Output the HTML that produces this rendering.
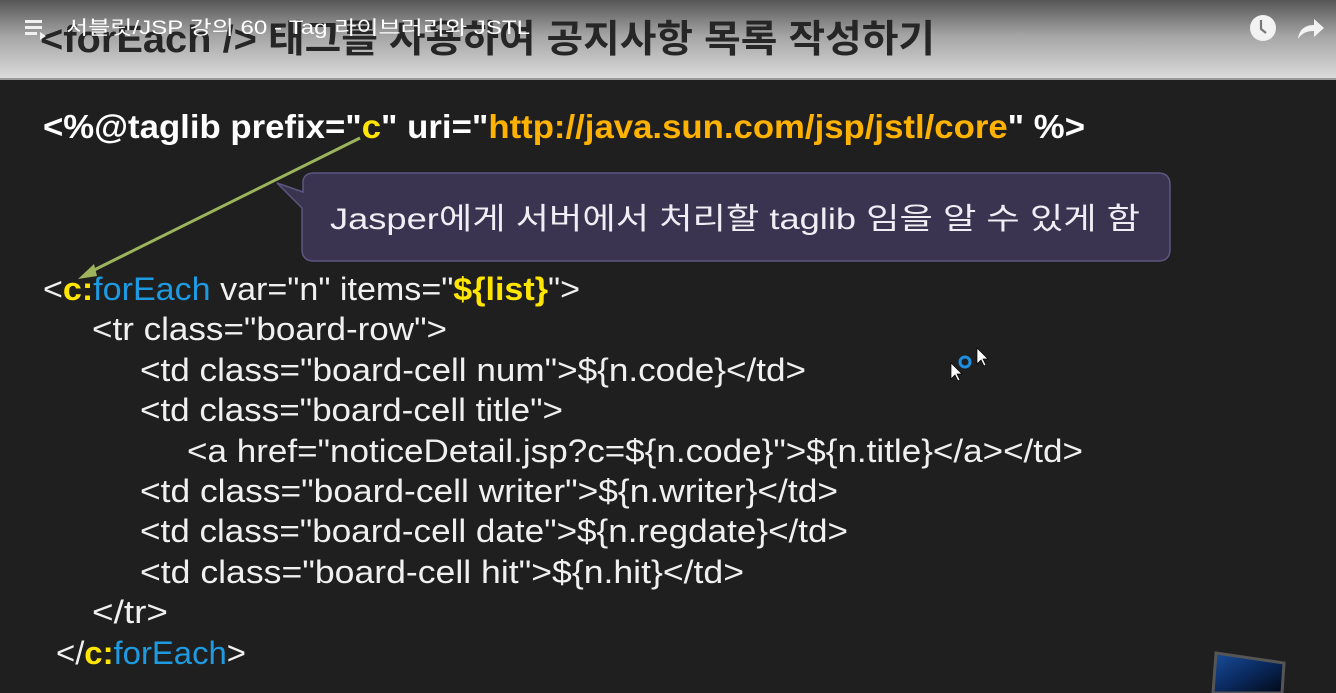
<!DOCTYPE html>
<html><head><meta charset="utf-8"><style>
html,body{margin:0;padding:0;background:#1f1f1f;width:1336px;height:693px;overflow:hidden}
svg{display:block}
text{font-family:"Liberation Sans","Noto Sans CJK KR",sans-serif}
</style></head><body>
<svg width="1336" height="693" viewBox="0 0 1336 693" xmlns="http://www.w3.org/2000/svg">
<defs>
<linearGradient id="hg" x1="0" y1="0" x2="0" y2="1">
<stop offset="0" stop-color="#565656"/><stop offset="0.45" stop-color="#a4a4a4"/><stop offset="1" stop-color="#dcdcdc"/>
</linearGradient>
<linearGradient id="mon" x1="0" y1="0" x2="1" y2="1">
<stop offset="0" stop-color="#1a4e9a"/><stop offset="0.5" stop-color="#0a2a60"/><stop offset="1" stop-color="#020814"/>
</linearGradient>
</defs>
<rect x="0" y="0" width="1336" height="693" fill="#1f1f1f"/>
<rect x="0" y="0" width="1336" height="79" fill="url(#hg)"/>
<rect x="0" y="78" width="1336" height="2" fill="#9a9a9a"/>
<text x="40" y="52" font-size="38" font-weight="bold" fill="#262626" textLength="895" lengthAdjust="spacingAndGlyphs">&lt;forEach /&gt; 태그를 사용하여 공지사항 목록 작성하기</text>
<rect x="25" y="20" width="17" height="3" fill="#f0f0f0"/><rect x="25" y="26" width="17" height="3" fill="#f0f0f0"/><rect x="25" y="32" width="12" height="3" fill="#f0f0f0"/>
<path d="M40 32 l6 4 l-6 4z" fill="#f0f0f0"/>
<text x="66" y="34" font-size="19" fill="#ffffff" textLength="464" lengthAdjust="spacingAndGlyphs">서블릿/JSP 강의 60 - Tag 라이브러리와 JSTL</text>
<circle cx="1263" cy="28" r="13" fill="#f2f2f2"/>
<path d="M1261 20 v9 l5 4" stroke="#777" stroke-width="2.2" fill="none"/>
<path d="M1298 39 C1299 29 1306 25 1314 25 V19 L1324 28 L1314 37 V31 C1307 31 1302 33 1298 39z" fill="#f2f2f2"/>
<text x="43" y="138" font-size="33" font-weight="bold" fill="#ffffff" textLength="1042" lengthAdjust="spacingAndGlyphs">&lt;%@taglib prefix="<tspan fill="#ffe600">c</tspan>" uri="<tspan fill="#ffb300">http://java.sun.com/jsp/jstl/core</tspan>" %&gt;</text>
<line x1="360" y1="138" x2="86" y2="274" stroke="#9db35c" stroke-width="3"/>
<path d="M78 279 L94 264 L97 276z" fill="#9db35c"/>
<path d="M314 173 H1158 Q1170 173 1170 185 V249 Q1170 261 1158 261 H314 Q302 261 302 249 V208 L277 183 L303 192 V185 Q302 173 314 173z" fill="#3a3450" stroke="#5d5680" stroke-width="1.5"/>
<text x="330" y="229" font-size="30" fill="#f0eef5" textLength="810" lengthAdjust="spacingAndGlyphs">Jasper에게 서버에서 처리할 taglib 임을 알 수 있게 함</text>
<g font-size="32" fill="#f0f0f0">
<text x="43" y="300" textLength="537" lengthAdjust="spacingAndGlyphs">&lt;<tspan fill="#ffe600" font-weight="bold">c:</tspan><tspan fill="#1e9be0">forEach</tspan> var="n" items="<tspan fill="#ffe600" font-weight="bold">${list}</tspan>"&gt;</text>
<text x="92" y="340" textLength="355" lengthAdjust="spacingAndGlyphs">&lt;tr class="board-row"&gt;</text>
<text x="140" y="381" textLength="666" lengthAdjust="spacingAndGlyphs">&lt;td class="board-cell num"&gt;${n.code}&lt;/td&gt;</text>
<text x="140" y="421" textLength="423" lengthAdjust="spacingAndGlyphs">&lt;td class="board-cell title"&gt;</text>
<text x="187" y="462" textLength="896" lengthAdjust="spacingAndGlyphs">&lt;a href="noticeDetail.jsp?c=${n.code}"&gt;${n.title}&lt;/a&gt;&lt;/td&gt;</text>
<text x="140" y="502" textLength="698" lengthAdjust="spacingAndGlyphs">&lt;td class="board-cell writer"&gt;${n.writer}&lt;/td&gt;</text>
<text x="140" y="542" textLength="708" lengthAdjust="spacingAndGlyphs">&lt;td class="board-cell date"&gt;${n.regdate}&lt;/td&gt;</text>
<text x="140" y="583" textLength="604" lengthAdjust="spacingAndGlyphs">&lt;td class="board-cell hit"&gt;${n.hit}&lt;/td&gt;</text>
<text x="92" y="623" textLength="76" lengthAdjust="spacingAndGlyphs">&lt;/tr&gt;</text>
<text x="56" y="664" textLength="190" lengthAdjust="spacingAndGlyphs">&lt;/<tspan fill="#ffe600" font-weight="bold">c:</tspan><tspan fill="#1e9be0">forEach</tspan>&gt;</text>
</g>
<circle cx="965" cy="362" r="5" fill="none" stroke="#1e8fe0" stroke-width="3"/>
<path d="M951 363 L951 379 L955 375 L958 381 L960 380 L957 374 L962 374z" fill="#fff" stroke="#000" stroke-width="0.7"/>
<path d="M977 348 L977 364 L981 360 L984 366 L986 365 L983 359 L988 359z" fill="#fff" stroke="#000" stroke-width="0.7"/>
<path d="M1216 653 L1284 663 L1282 693 L1213 693z" fill="url(#mon)" stroke="#555" stroke-width="3"/>
</svg>
</body></html>
